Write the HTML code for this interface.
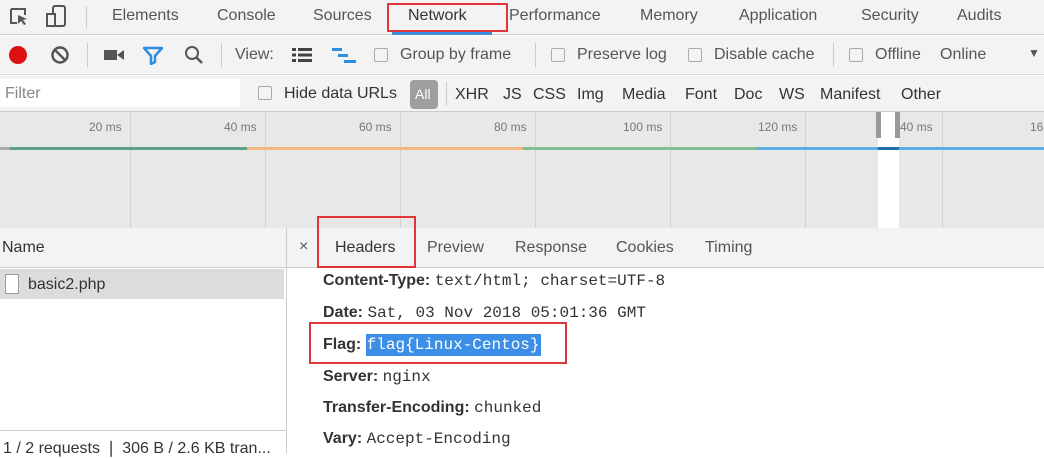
<!DOCTYPE html>
<html><head><style>
*{margin:0;padding:0;box-sizing:border-box}
body{width:1044px;height:454px;overflow:hidden;background:#fff;font-family:"Liberation Sans",sans-serif;color:#333;position:relative;font-size:16px}
.a{position:absolute;white-space:nowrap}
.cb{position:absolute;width:14px;height:14px;border:1px solid #aaa;border-radius:2px;background:#f3f3f3}
.mono{font-family:"Liberation Mono",monospace;font-size:16px}
.hk{font-weight:bold;color:#333;font-size:16px}
</style></head><body>
<div class="a" style="left:0;top:0;width:1044px;height:35px;background:#f3f3f3;border-bottom:1px solid #ccc"></div>
<svg class="a" style="left:8px;top:6px" width="24" height="22"><path d="M3 3h14v6M3 3v14h6" stroke="#555" stroke-width="2" fill="none"/><path d="M10 9l9 4-4 1 3 4-2 1-3-4-3 3z" fill="#555"/></svg>
<svg class="a" style="left:45px;top:4px" width="24" height="26"><rect x="8" y="2" width="12" height="20" rx="2" stroke="#555" stroke-width="2" fill="none"/><rect x="2" y="10" width="8" height="12" stroke="#555" stroke-width="2" fill="#f3f3f3"/></svg>
<div class="a" style="left:86px;top:6px;width:1px;height:22px;background:#ccc"></div>
<div class="a" style="left:112px;top:7px;color:#555">Elements</div>
<div class="a" style="left:217px;top:7px;color:#555">Console</div>
<div class="a" style="left:313px;top:7px;color:#555">Sources</div>
<div class="a" style="left:408px;top:7px;color:#333">Network</div>
<div class="a" style="left:392px;top:32px;width:100px;height:3px;background:#3b8de0"></div>
<div class="a" style="left:387px;top:3px;width:121px;height:29px;border:2px solid #e0363b"></div>
<div class="a" style="left:509px;top:7px;color:#555">Performance</div>
<div class="a" style="left:640px;top:7px;color:#555">Memory</div>
<div class="a" style="left:739px;top:7px;color:#555">Application</div>
<div class="a" style="left:861px;top:7px;color:#555">Security</div>
<div class="a" style="left:957px;top:7px;color:#555">Audits</div>
<div class="a" style="left:0;top:36px;width:1044px;height:39px;background:#f3f3f3;border-bottom:1px solid #ddd"></div>
<div class="a" style="left:9px;top:46px;width:18px;height:18px;border-radius:50%;background:#dd1111"></div>
<svg class="a" style="left:50px;top:45px" width="20" height="20"><circle cx="10" cy="10" r="7.5" stroke="#555" stroke-width="2.5" fill="none"/><path d="M5 5l10 10" stroke="#555" stroke-width="2.5"/></svg>
<div class="a" style="left:87px;top:43px;width:1px;height:24px;background:#ccc"></div>
<svg class="a" style="left:103px;top:47px" width="22" height="16"><rect x="1" y="3" width="13" height="10" fill="#555"/><path d="M14 8l7-5v10z" fill="#555"/></svg>
<svg class="a" style="left:142px;top:45px" width="22" height="20"><path d="M2 3h18l-7 8v6l-4 2v-8z" stroke="#2d8ee0" stroke-width="2.5" fill="none" stroke-linejoin="round"/></svg>
<svg class="a" style="left:183px;top:44px" width="22" height="22"><circle cx="9" cy="9" r="6" stroke="#555" stroke-width="2" fill="none"/><path d="M13 13l6 6" stroke="#555" stroke-width="2.5"/></svg>
<div class="a" style="left:221px;top:43px;width:1px;height:24px;background:#ccc"></div>
<div class="a" style="left:235px;top:46px;color:#555">View:</div>
<svg class="a" style="left:292px;top:47px" width="22" height="16"><g fill="#444"><rect x="0" y="1" width="4" height="3"/><rect x="6" y="1" width="14" height="3"/><rect x="0" y="6.5" width="4" height="3"/><rect x="6" y="6.5" width="14" height="3"/><rect x="0" y="12" width="4" height="3"/><rect x="6" y="12" width="14" height="3"/></g></svg>
<svg class="a" style="left:332px;top:47px" width="26" height="18"><g fill="#2d8ee0"><rect x="0" y="1" width="10" height="3"/><rect x="6" y="7" width="10" height="3"/><rect x="12" y="13" width="12" height="3"/></g></svg>
<div class="cb" style="left:374px;top:48px"></div>
<div class="a" style="left:400px;top:46px;color:#555">Group by frame</div>
<div class="a" style="left:535px;top:43px;width:1px;height:24px;background:#ccc"></div>
<div class="cb" style="left:551px;top:48px"></div>
<div class="a" style="left:577px;top:46px;color:#555">Preserve log</div>
<div class="cb" style="left:688px;top:48px"></div>
<div class="a" style="left:714px;top:46px;color:#555">Disable cache</div>
<div class="a" style="left:833px;top:43px;width:1px;height:24px;background:#ccc"></div>
<div class="cb" style="left:849px;top:48px"></div>
<div class="a" style="left:875px;top:46px;color:#555">Offline</div>
<div class="a" style="left:940px;top:46px;color:#555">Online</div>
<div class="a" style="left:1028px;top:46px;color:#555;font-size:12px">▼</div>
<div class="a" style="left:0;top:76px;width:1044px;height:36px;background:#f3f3f3;border-bottom:1px solid #ccc"></div>
<div class="a" style="left:0;top:79px;width:240px;height:28px;background:#fff"></div>
<div class="a" style="left:5px;top:85px;color:#888">Filter</div>
<div class="cb" style="left:258px;top:86px"></div>
<div class="a" style="left:284px;top:85px;color:#333">Hide data URLs</div>
<div class="a" style="left:410px;top:80px;width:28px;height:29px;background:#9e9e9e;border-radius:4px"></div>
<div class="a" style="left:415px;top:86px;color:#fff;font-size:14px">All</div>
<div class="a" style="left:446px;top:82px;width:1px;height:24px;background:#ccc"></div>
<div class="a" style="left:455px;top:86px">XHR</div>
<div class="a" style="left:503px;top:86px">JS</div>
<div class="a" style="left:533px;top:86px">CSS</div>
<div class="a" style="left:577px;top:86px">Img</div>
<div class="a" style="left:622px;top:86px">Media</div>
<div class="a" style="left:685px;top:86px">Font</div>
<div class="a" style="left:734px;top:86px">Doc</div>
<div class="a" style="left:779px;top:86px">WS</div>
<div class="a" style="left:820px;top:86px">Manifest</div>
<div class="a" style="left:901px;top:86px">Other</div>
<div class="a" style="left:0;top:112px;width:1044px;height:116px;background:#e8e8e8"></div>
<div class="a" style="left:130px;top:112px;width:1px;height:116px;background:#d2d2d2"></div>
<div class="a" style="left:265px;top:112px;width:1px;height:116px;background:#d2d2d2"></div>
<div class="a" style="left:400px;top:112px;width:1px;height:116px;background:#d2d2d2"></div>
<div class="a" style="left:535px;top:112px;width:1px;height:116px;background:#d2d2d2"></div>
<div class="a" style="left:670px;top:112px;width:1px;height:116px;background:#d2d2d2"></div>
<div class="a" style="left:805px;top:112px;width:1px;height:116px;background:#d2d2d2"></div>
<div class="a" style="left:942px;top:112px;width:1px;height:116px;background:#d2d2d2"></div>
<div class="a" style="left:89px;top:120px;font-size:12px;color:#777">20 ms</div>
<div class="a" style="left:224px;top:120px;font-size:12px;color:#777">40 ms</div>
<div class="a" style="left:359px;top:120px;font-size:12px;color:#777">60 ms</div>
<div class="a" style="left:494px;top:120px;font-size:12px;color:#777">80 ms</div>
<div class="a" style="left:623px;top:120px;font-size:12px;color:#777">100 ms</div>
<div class="a" style="left:758px;top:120px;font-size:12px;color:#777">120 ms</div>
<div class="a" style="left:900px;top:120px;font-size:12px;color:#777">40 ms</div>
<div class="a" style="left:1030px;top:120px;font-size:12px;color:#777">16</div>
<div class="a" style="left:0;top:147px;width:10px;height:3px;background:#aaa"></div>
<div class="a" style="left:10px;top:147px;width:237px;height:3px;background:#5f9e8a"></div>
<div class="a" style="left:247px;top:147px;width:276px;height:3px;background:#f0b880"></div>
<div class="a" style="left:523px;top:147px;width:234px;height:3px;background:#80c090"></div>
<div class="a" style="left:757px;top:147px;width:287px;height:3px;background:#5aaee6"></div>
<div class="a" style="left:878px;top:112px;width:21px;height:116px;background:#fff"></div>
<div class="a" style="left:876px;top:112px;width:5px;height:26px;background:#999"></div>
<div class="a" style="left:895px;top:112px;width:5px;height:26px;background:#999"></div>
<div class="a" style="left:878px;top:147px;width:21px;height:3px;background:#1a6fb0"></div>
<div class="a" style="left:0;top:228px;width:1044px;height:40px;background:#f3f3f3;border-bottom:1px solid #ccc"></div>
<div class="a" style="left:286px;top:228px;width:1px;height:226px;background:#ccc"></div>
<div class="a" style="left:2px;top:239px;color:#333">Name</div>
<div class="a" style="left:299px;top:238px;color:#555">×</div>
<div class="a" style="left:335px;top:239px;color:#333">Headers</div>
<div class="a" style="left:317px;top:216px;width:99px;height:52px;border:2px solid #e0363b"></div>
<div class="a" style="left:427px;top:239px;color:#555">Preview</div>
<div class="a" style="left:515px;top:239px;color:#555">Response</div>
<div class="a" style="left:616px;top:239px;color:#555">Cookies</div>
<div class="a" style="left:705px;top:239px;color:#555">Timing</div>
<div class="a" style="left:0;top:269px;width:284px;height:30px;background:#dcdcdc"></div>
<div class="a" style="left:5px;top:274px;width:14px;height:20px;border:1px solid #999;background:#fff"></div>
<div class="a" style="left:28px;top:276px;color:#333">basic2.php</div>
<div class="a" style="left:0;top:430px;width:286px;height:1px;background:#ccc"></div>
<div class="a" style="left:3px;top:438px;color:#333">1 / 2 requests  ❘  306 B / 2.6 KB tran...</div>
<div class="a" style="left:323px;top:272px"><span class="hk">Content-Type:</span> <span class="mono">text/html; charset=UTF-8</span></div>
<div class="a" style="left:323px;top:304px"><span class="hk">Date:</span> <span class="mono">Sat, 03 Nov 2018 05:01:36 GMT</span></div>
<div class="a" style="left:309px;top:322px;width:258px;height:42px;border:2px solid #e0363b"></div>
<div class="a" style="left:323px;top:336px"><span class="hk">Flag:</span> <span class="mono" style="background:#3c8ee6;color:#fff;padding:2px 1px">flag{Linux-Centos}</span></div>
<div class="a" style="left:323px;top:368px"><span class="hk">Server:</span> <span class="mono">nginx</span></div>
<div class="a" style="left:323px;top:399px"><span class="hk">Transfer-Encoding:</span> <span class="mono">chunked</span></div>
<div class="a" style="left:323px;top:430px"><span class="hk">Vary:</span> <span class="mono">Accept-Encoding</span></div>
</body></html>
